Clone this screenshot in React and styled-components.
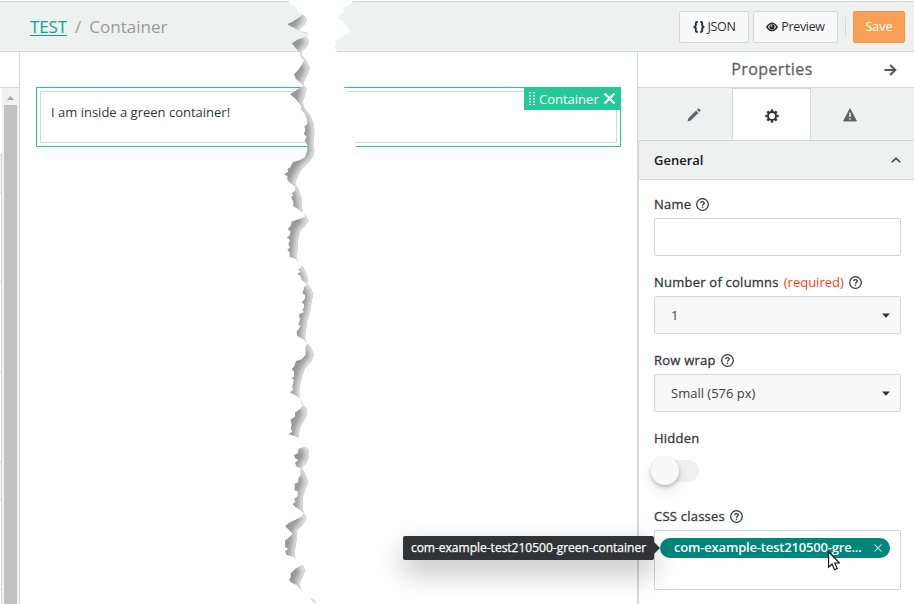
import React from "react";
import styled, { createGlobalStyle, css } from "styled-components";

const Global = createGlobalStyle`
  *, *::before, *::after { box-sizing: border-box; }
  html, body { margin: 0; padding: 0; }
  body { width: 914px; height: 604px; overflow: hidden; background: #fff;
    font-family: "Open Sans", "Noto Sans", sans-serif; font-size: 13px; color: #333; }
  button { font: inherit; color: inherit; margin: 0; }
`;

const line = "#d5d6d7";

/* A weight between regular and semibold. */
const medium = css`
  font-weight: 400;
  letter-spacing: 0.23px;
  -webkit-text-stroke: 0.3px currentColor;
`;

const Page = styled.div`
  position: relative; width: 914px; height: 604px; overflow: hidden;
  display: flex; flex-direction: column; padding-top: 1px;
`;
const TopBar = styled.header`
  flex: none; height: 51px; display: flex; align-items: center; justify-content: space-between;
  padding: 0 9px 0 30px; background: #eff1f1;
  border-top: 1px solid ${line}; border-bottom: 1px solid ${line};
`;
const Crumbs = styled.nav`
  display: flex; gap: 8px; font-size: 17px; line-height: 24px; color: #999;
`;
const CrumbLink = styled.a`
  color: #0da296; text-decoration: underline; text-underline-offset: 1.5px; text-decoration-thickness: 1px;
  letter-spacing: -0.1px;
`;
const Actions = styled.div`display: flex; align-items: center; gap: 4px;`;
const Button = styled.button`
  display: flex; align-items: center; justify-content: center; gap: 3px;
  width: ${(p) => p.$width}px; height: 32px; padding: 0; border-radius: 2px;
  font-size: 12.5px; letter-spacing: -0.35px;
  ${(p) => p.$primary
    ? css`background: #faa157; border: 1px solid #e9954f; color: #fff; letter-spacing: 0;`
    : css`background: #f9f9f9; border: 1px solid #d5d6da; color: #2d3134;`}
`;
const Separator = styled.span`width: 1px; height: 20px; background: ${line}; margin: 0 3px 0 3px;`;

const Main = styled.main`flex: 1; display: flex; min-height: 0;`;
const Sidebar = styled.aside`
  width: 20px; flex: none; border-right: 1px solid ${line}; display: flex; flex-direction: column;
`;
const SidebarHead = styled.div`height: 36px; flex: none; border-bottom: 1px solid ${line};`;
const SidebarBody = styled.div`flex: 1; display: flex; min-height: 0; overflow: hidden;`;
const ItemList = styled.div`width: 2px; padding-top: 66px; display: flex; flex-direction: column;`;
const Item = styled.div`
  flex: none; height: ${(p) => p.$height}px; border: 1px solid ${line}; border-width: 1px 1px 0 0;
  background: ${(p) => (p.$head ? "#eff1f1" : "#fff")};
`;
const Scrollbar = styled.div`
  width: 17px; background: #f1f1f1; padding: 0 2px; display: flex; flex-direction: column; align-items: center;
`;
const ScrollUp = styled.div`height: 17px; display: flex; align-items: center; padding-top: 2px;`;
const Thumb = styled.div`flex: 1; width: 13px; background: #c1c1c1;`;

const Canvas = styled.section`flex: 1; padding: 35px 16px 0;`;
const Container = styled.div`
  position: relative; height: 60px; padding: 3px; border: 1px solid #25c997;
`;
const ContainerInner = styled.div`
  height: 52px; border: 1px solid ${line}; padding: 10px 10px; line-height: 20px; color: #32373a;
`;
const ContainerTag = styled.div`
  position: absolute; top: -1px; right: -1px; width: 97px; height: 23px; padding: 0 6px 0 5px;
  display: flex; align-items: center; gap: 4px; background: #25c997; color: #fff;
`;
const TagText = styled.span`flex: 1; white-space: nowrap;`;

const Panel = styled.aside`
  width: 277px; flex: none; border-left: 1px solid ${line}; display: flex; flex-direction: column;
`;
const PanelHead = styled.div`
  height: 36px; flex: none; display: grid; grid-template-columns: 1fr auto; align-items: center;
  padding: 0 17px 0 22px; border-bottom: 1px solid ${line};
`;
const PanelTitle = styled.h2`
  margin: 0; text-align: center; font-size: 16px; line-height: 22px; color: #616466; ${medium}
  letter-spacing: 0.4px; padding-bottom: 2px;
`;
const Tabs = styled.div`
  height: 52px; flex: none; display: grid; grid-template-columns: 94px 79px 1fr; background: #eff1f1;
`;
const Tab = styled.div`
  display: flex; align-items: center; justify-content: center; padding-top: 2px;
  padding-left: ${(p) => p.$shift || 0}px; padding-right: ${(p) => p.$back || 0}px;
  color: ${(p) => (p.$active ? "#2d3134" : "#5f6466")};
  ${(p) => p.$active && css`background: #fff; border: 1px solid ${line}; border-bottom: 0;`}
`;
const Settings = styled.div`flex: 1; border-left: 1px solid ${line};`;
const SectionHead = styled.div`
  height: 40px; display: flex; align-items: center; justify-content: space-between;
  padding: 0 13px 0 15px; background: #eff1f1; border: solid ${line}; border-width: 1px 0;
  font-weight: 600; color: #16191b;
`;
const Fields = styled.div`padding: 14px 13px 0 15px; display: flex; flex-direction: column;`;
const Field = styled.div`height: 78px; flex: none;`;
const Label = styled.div`
  display: flex; align-items: center; gap: 5px; height: 20px; margin-bottom: 4px;
  color: #32373a; white-space: nowrap; ${medium}
`;
const Required = styled.span`color: #fa3c14; letter-spacing: 0; -webkit-text-stroke: 0;`;
const Input = styled.div`
  height: ${(p) => p.$height || 38}px; width: 247px; border: 1px solid #d3d4d5; border-radius: 2px; background: #fff;
  padding: 7px 5px;
`;
const Select = styled.div`
  height: 38px; width: 247px; display: flex; align-items: center; justify-content: space-between;
  padding: 0 10px 0 16px; border: 1px solid #d5d6da; border-radius: 2px; background: #f8f8f8; color: #3c4043;
`;
const Switch = styled.div`
  width: 45px; height: 22px; margin-top: 12px; border-radius: 11px; background: #eff1f1; display: flex; align-items: center;
`;
const Knob = styled.div`
  flex: none; width: 28px; height: 28px; margin-left: -3px; border-radius: 50%; background: #f9f9f9;
  box-shadow: 0 2px 4px rgba(0,0,0,.25), 0 8px 16px rgba(0,0,0,.08);
`;
const Chip = styled.div`
  width: 230px; height: 20px; border-radius: 10px; background: #00857b; color: #fff;
  display: flex; align-items: center; justify-content: space-between; padding: 0 8px 0 14px;
  font-weight: 600; letter-spacing: -0.18px; line-height: 18px; white-space: nowrap;
`;
const ChipText = styled.span`padding-bottom: 2px;`;
const Tooltip = styled.div`
  position: absolute; left: 403px; top: 536px; width: 251px; height: 24px; border-radius: 2px;
  background: #303437; color: #fff; font-size: 12px; line-height: 23px; text-align: center;
  -webkit-text-stroke: 0.25px #fff;
  white-space: nowrap; box-shadow: 0 12px 28px rgba(0,0,0,.27);
  &::after { content: ""; position: absolute; left: 100%; top: 6px; border: 6px solid transparent;
    border-left-color: #303437; border-right: 0; }
`;
const Overlay = styled.svg`
  position: absolute; left: ${(p) => p.$x}px; top: ${(p) => p.$y}px; pointer-events: none; display: block;
`;

const HelpIcon = () => (
  <svg width="13" height="13" viewBox="0 0 13 13" fill="none" stroke="#32373a">
    <circle cx="6.5" cy="6.5" r="5.8" strokeWidth="1.25" />
    <path d="M4.7 5.2C4.7 3 8.3 3 8.3 5.1C8.3 6.3 6.5 6.2 6.5 7.7" strokeWidth="1.3" />
    <circle cx="6.5" cy="9.3" r=".8" fill="#32373a" stroke="none" />
  </svg>
);
const BracesIcon = () => (
  <svg width="12" height="12" viewBox="0 0 12 12" fill="none" stroke="currentColor" strokeWidth="1.9">
    <path d="M4.8 1H4Q2.8 1 2.8 2.2V4.3Q2.8 5.8 .7 6Q2.8 6.2 2.8 7.7V9.8Q2.8 11 4 11H4.8M7.2 1H8Q9.2 1 9.2 2.2V4.3Q9.2 5.8 11.3 6Q9.2 6.2 9.2 7.7V9.8Q9.2 11 8 11H7.2" />
  </svg>
);
const EyeIcon = () => (
  <svg width="12" height="10" viewBox="0 0 12 10">
    <path fill="none" stroke="currentColor" strokeWidth="1.4" d="M.8 5Q6-2.6 11.2 5Q6 12.2.8 5Z" />
    <circle cx="6" cy="4.8" r="2.6" fill="currentColor" />
    <circle cx="5.3" cy="3.8" r=".8" fill="#f9f9f9" />
  </svg>
);
const ArrowIcon = () => (
  <svg width="13" height="12" viewBox="0 0 13 12" fill="none" stroke="#54585a" strokeWidth="2">
    <path d="M.5 6H11M6.2 1L11.3 6L6.2 11" />
  </svg>
);
const PencilIcon = () => (
  <svg width="14" height="14" viewBox="0 0 14 14" fill="currentColor">
    <path d="M.5 13.5L1.4 10.2L9.1 2.6L11.4 4.9L3.7 12.5ZM9.9 1.8L11 .7Q11.6.2 12.2.8L13.2 1.8Q13.8 2.4 13.2 3L12.2 4.1Z" />
  </svg>
);
const GearIcon = () => (
  <svg width="14" height="14" viewBox="-7 -7 14 14" fill="none" stroke="currentColor">
    <circle r="4" strokeWidth="1.8" />
    {[0, 45, 90, 135, 180, 225, 270, 315].map((a) => (
      <path key={a} d="M0-4.5V-6.6" strokeWidth="2.5" transform={`rotate(${a})`} />
    ))}
  </svg>
);
const WarnIcon = () => (
  <svg width="14" height="14" viewBox="0 0 14 14">
    <path d="M7 .8L13.4 13H.6Z" fill="currentColor" stroke="currentColor" strokeLinejoin="round" />
    <path d="M7 4.8V9M7 10.2V11.7" stroke="#eff1f1" strokeWidth="1.5" />
  </svg>
);
const ChevronUp = () => (
  <svg width="10" height="6" viewBox="0 0 10 6" fill="none" stroke="#32373a" strokeWidth="1.5">
    <path d="M.8 5.3L5 1.2L9.2 5.3" />
  </svg>
);
const Caret = () => (
  <svg width="8" height="5" viewBox="0 0 8 5"><path d="M0 .5H8L4 4.8Z" fill="#2d3134" /></svg>
);
const Cross = ({ size, width, opacity = 1 }) => (
  <svg width={size} height={size} viewBox="0 0 10 10" stroke="#fff" strokeWidth={width} opacity={opacity}>
    <path d="M.5.5L9.5 9.5M9.5.5L.5 9.5" />
  </svg>
);
const GripIcon = () => (
  <svg width="6" height="13" viewBox="0 0 6 13" fill="#fff">
    {[0, 3, 6, 9, 12].map((y) => (
      <React.Fragment key={y}>
        <rect y={y} width="2" height="1.4" /><rect x="4" y={y} width="2" height="1.4" />
      </React.Fragment>
    ))}
  </svg>
);

/* Torn-paper edges, at three units per pixel with x measured from 270px. */
const tornEdge = "57,0 57,6 60,12 75,20 85,35 97,45 80,57 66,66 52,72 60,78 75,85 88,93 110,98 117,103 105,112 85,118 65,130 75,142 85,152 92,160 92,170 103,180 95,195 82,213 72,222 77,236 90,246 102,257 80,270 60,283 75,295 92,315 95,330 105,342 108,350 112,360 112,372 103,380 106,388 102,402 110,410 104,422 112,435 112,450 105,472 90,480 68,487 62,500 52,508 55,515 42,523 52,528 52,540 65,552 77,560 75,572 65,580 70,587 63,590 70,605 70,618 85,628 100,638 110,648 95,655 78,660 65,665 62,678 53,687 62,695 58,708 50,712 60,720 55,733 60,742 52,750 60,758 58,770 80,778 88,787 97,798 85,810 92,815 82,822 92,828 95,840 112,852 103,862 97,880 105,885 105,895 95,908 102,912 102,922 97,930 102,937 87,942 90,960 85,975 92,978 80,995 82,1008 100,1018 113,1030 107,1040 107,1065 95,1078 78,1083 72,1100 65,1107 72,1115 72,1130 65,1135 72,1140 67,1160 70,1170 60,1177 75,1185 90,1195 100,1215 92,1225 75,1238 75,1250 62,1258 65,1275 62,1285 67,1295 55,1303 72,1307 90,1315 100,1332 105,1340 85,1347 85,1358 72,1365 75,1375 85,1380 75,1388 80,1400 92,1405 92,1425 85,1435 85,1447 73,1452 75,1460 73,1470 85,1475 82,1490 72,1497 77,1505 68,1512 75,1520 88,1528 102,1540 95,1550 75,1560 60,1567 45,1578 55,1588 68,1602 58,1612 45,1622 45,1640 55,1647 45,1653 50,1665 70,1670 80,1683 97,1695 78,1705 62,1720 62,1732 57,1740 65,1748 80,1755 95,1772 120,1795 138,1812";
const shadeEdge = "138,1812 132,1800 120,1795 95,1772 88,1750 98,1730 106,1710 97,1695 80,1683 73,1672 75,1650 80,1620 82,1590 98,1575 110,1555 102,1540 98,1525 98,1495 105,1470 115,1445 105,1420 95,1405 108,1390 117,1370 117,1350 105,1340 100,1332 90,1315 85,1312 90,1285 100,1265 110,1245 110,1225 98,1215 88,1190 88,1165 95,1135 105,1105 125,1082 132,1065 123,1042 113,1030 105,1015 108,990 112,960 120,935 125,905 130,880 122,865 112,852 113,835 105,810 97,798 88,787 80,775 82,750 85,715 92,690 105,678 116,662 108,648 100,638 95,625 95,595 85,565 75,550 85,525 97,505 115,488 130,468 133,450 130,430 133,400 132,375 120,345 102,322 98,305 105,285 110,265 102,257 102,245 112,225 120,205 110,183 95,165 95,155 113,138 117,122 110,108 117,103 88,93 88,88 103,75 110,62 108,52 97,45";
const shadeStart = "85,35 75,20 60,12 57,6";
const farEdge = "258,1812 258,438 254,427 231,273 222,262 201,155 200,152 192,142 198,133 195,123 215,112 232,102 240,93 228,78 222,65 207,57 208,45 222,35 220,25 243,12 248,3 248,0";

const Tear = () => (
  <Overlay $x={270} $y={0} width="100" height="604" viewBox="0 0 300 1812">
    <defs>
      <filter id="soft" x="-50%" y="-2%" width="200%" height="104%">
        <feGaussianBlur stdDeviation="9" />
      </filter>
      <clipPath id="shade"><polygon points={`${tornEdge} ${shadeEdge} ${shadeStart}`} /></clipPath>
    </defs>
    <polygon points={`${tornEdge} ${farEdge}`} fill="#fff" />
    <g clipPath="url(#shade)">
      <rect width="300" height="1812" fill="#969696" />
      <polyline points={shadeEdge} fill="none" stroke="#fff" strokeWidth="17" filter="url(#soft)" />
    </g>
  </Overlay>
);

const Cursor = () => (
  <Overlay $x={828} $y={551} width="12" height="20" viewBox="0 0 12 20">
    <path d="M.6.8V16.2L4 13L6.5 18.7L9.2 17.5L6.8 12H11.4Z" fill="#fff" stroke="#111" strokeWidth="1.1" />
  </Overlay>
);

const sidebarItems = [
  { height: 39, head: true }, { height: 88 }, { height: 91 }, { height: 89 },
  { height: 39, head: true }, { height: 89 }, { height: 60 },
];

export default function App() {
  return (
    <Page>
      <Global />
      <TopBar>
        <Crumbs><CrumbLink>TEST</CrumbLink><span>/</span><span>Container</span></Crumbs>
        <Actions>
          <Button $width={70}><BracesIcon />JSON</Button>
          <Button $width={85}><EyeIcon />Preview</Button>
          <Separator />
          <Button $width={52} $primary>Save</Button>
        </Actions>
      </TopBar>
      <Main>
        <Sidebar>
          <SidebarHead />
          <SidebarBody>
            <ItemList>
              {sidebarItems.map((item, i) => <Item key={i} $height={item.height} $head={item.head} />)}
            </ItemList>
            <Scrollbar>
              <ScrollUp><svg width="7" height="4"><path d="M0 4L3.5 0L7 4Z" fill="#a3a3a3" /></svg></ScrollUp>
              <Thumb />
            </Scrollbar>
          </SidebarBody>
        </Sidebar>
        <Canvas>
          <Container>
            <ContainerInner>I am inside a green container!</ContainerInner>
            <ContainerTag><GripIcon /><TagText>Container</TagText><Cross size={11} width={2} /></ContainerTag>
          </Container>
        </Canvas>
        <Panel>
          <PanelHead><PanelTitle>Properties</PanelTitle><ArrowIcon /></PanelHead>
          <Tabs>
            <Tab $shift={17}><PencilIcon /></Tab>
            <Tab $active><GearIcon /></Tab>
            <Tab $back={26}><WarnIcon /></Tab>
          </Tabs>
          <Settings>
            <SectionHead>General<ChevronUp /></SectionHead>
            <Fields>
              <Field><Label>Name <HelpIcon /></Label><Input /></Field>
              <Field>
                <Label>Number of columns <Required>(required)</Required> <HelpIcon /></Label>
                <Select>1<Caret /></Select>
              </Field>
              <Field><Label>Row wrap <HelpIcon /></Label><Select>Small (576 px)<Caret /></Select></Field>
              <Field><Label>Hidden</Label><Switch><Knob /></Switch></Field>
              <Field>
                <Label>CSS classes <HelpIcon /></Label>
                <Input $height={60}>
                  <Chip><ChipText>com-example-test210500-gre...</ChipText><Cross size={8} width={1.3} opacity={0.75} /></Chip>
                </Input>
              </Field>
            </Fields>
          </Settings>
        </Panel>
      </Main>
      <Tear />
      <Tooltip>com-example-test210500-green-container</Tooltip>
      <Cursor />
    </Page>
  );
}
